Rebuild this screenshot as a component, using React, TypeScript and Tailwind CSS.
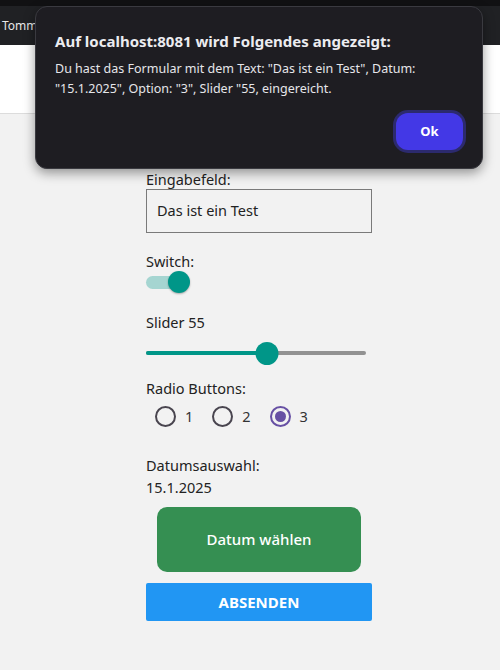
import { useState } from "react";

const font = { fontFamily: '"Noto Sans", "Open Sans", sans-serif' };

function Radio({ label, checked }: { label: string; checked?: boolean }) {
  return (
    <label className="flex items-center gap-[9px]">
      <span
        className={`flex h-[21px] w-[21px] items-center justify-center rounded-full border-2 ${
          checked ? "border-[#6750a4]" : "border-[#49454f]"
        }`}
      >
        {checked && <span className="h-[11px] w-[11px] rounded-full bg-[#6750a4]" />}
      </span>
      <span className="text-[14.5px] text-[#333]">{label}</span>
    </label>
  );
}

export default function App() {
  const [value] = useState(55);

  return (
    <div className="relative flex h-[670px] w-[500px] flex-col overflow-hidden bg-[#f2f2f2]" style={font}>
      {/* Browser chrome */}
      <div className="h-[6px] bg-[#111113]" />
      <div className="flex h-[39px] items-center bg-[#202124] pl-[2px] text-[12px] text-[#e8e8e8]">
        Tommy
      </div>
      <div className="h-[69px] border-b border-[#dcdcdc] bg-white" />

      {/* Form */}
      <div className="ml-[146px] flex w-[226px] flex-col pt-[55px] text-[14.5px] text-[#222]">
        <span className="leading-[20px]">Eingabefeld:</span>
        <div className="flex h-[44px] items-center border border-[#7a7a7a] px-[10px]">
          Das ist ein Test
        </div>

        <span className="mt-[18px] leading-[20px]">Switch:</span>
        <div className="relative h-[22px] w-[44px]">
          <div className="absolute left-0 top-[5px] h-[13px] w-[42px] rounded-full bg-[#a5d5d1]" />
          <div className="absolute left-[22px] top-0 h-[22px] w-[22px] rounded-full bg-[#009688] shadow-[0_1px_2px_rgba(0,0,0,0.3)]" />
        </div>

        <span className="mt-[19px] leading-[20px]">Slider {value}</span>
        <div className="relative mt-[10px] h-[22px] w-[220px]">
          <div className="absolute left-0 right-0 top-[9px] h-[4px] rounded-full bg-[#929292]" />
          <div className="absolute left-0 top-[9px] h-[4px] rounded-full bg-[#009688]" style={{ width: `${value}%` }} />
          <div
            className="absolute top-0 h-[23px] w-[23px] -translate-x-1/2 rounded-full bg-[#009688]"
            style={{ left: `${value}%` }}
          />
        </div>

        <span className="mt-[14px] leading-[20px]">Radio Buttons:</span>
        <div className="mt-[8px] flex gap-[19px] pl-[9px]">
          <Radio label="1" />
          <Radio label="2" />
          <Radio label="3" checked />
        </div>

        <span className="mt-[27px] leading-[20px]">Datumsauswahl:</span>
        <span className="mt-[2px] leading-[20px]">15.1.2025</span>
        <button className="mx-auto mt-[10px] flex h-[65px] w-[204px] items-center justify-center rounded-[10px] bg-[#358f52] text-[15px] font-medium text-white">
          Datum wählen
        </button>
        <button className="mt-[11px] flex h-[38px] items-center justify-center rounded-[2px] bg-[#2196f3] text-[15px] font-bold text-white">
          ABSENDEN
        </button>
      </div>

      {/* Alert dialog */}
      <div className="absolute left-[35px] top-[6px] w-[448px] rounded-[12px] border border-[#3a3a40] bg-[#1e1d22] px-[19px] pb-[18px] pt-[22px] shadow-[0_4px_12px_rgba(0,0,0,0.4)]">
        <div className="text-[15px] font-bold leading-[24px] text-[#ececf0]">
          Auf localhost:8081 wird Folgendes angezeigt:
        </div>
        <div className="mt-[6px] text-[12.5px] leading-[20px] text-[#e6e6ea]">
          Du hast das Formular mit dem Text: "Das ist ein Test", Datum:
          <br />
          "15.1.2025", Option: "3", Slider "55, eingereicht.
        </div>
        <div className="mt-[14px] flex justify-end">
          <button className="h-[37px] w-[67px] rounded-[12px] bg-[#4338e6] text-[13px] font-bold text-white ring-[3px] ring-[#2c2a6e]">
            Ok
          </button>
        </div>
      </div>
    </div>
  );
}
